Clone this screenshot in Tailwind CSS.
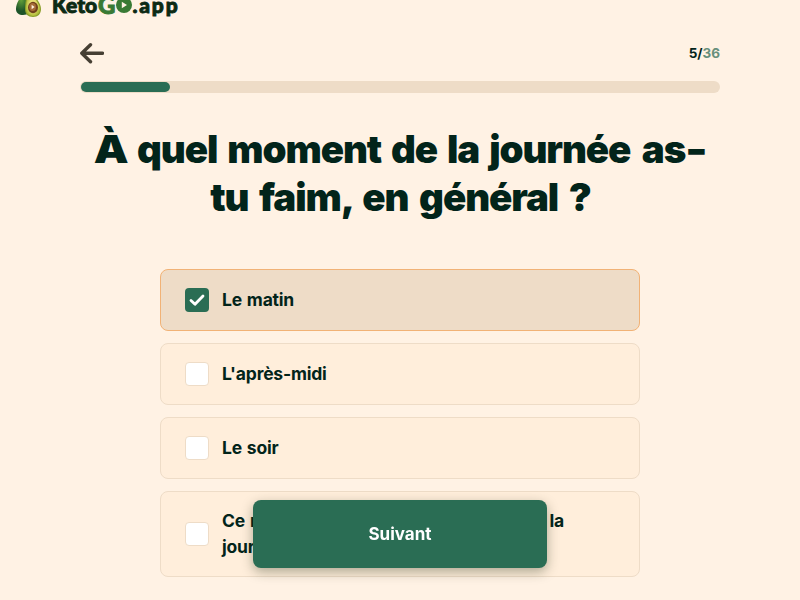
<!DOCTYPE html>
<html lang="fr">
<head>
<meta charset="utf-8">
<title>KetoGO.app</title>
<script src="https://cdn.jsdelivr.net/npm/@tailwindcss/browser@4"></script>
</head>
<body class="h-[600px] overflow-hidden bg-[#fff2e4] font-['Inter',sans-serif] text-[#02241a]">
<header class="flex h-[33px] items-start pl-4">
  <svg class="-mt-[9px] h-[26px] w-[26px] shrink-0" viewBox="0 0 26 26">
    <defs>
      <radialGradient id="skin" cx=".35" cy=".35"><stop offset="0" stop-color="#65a33a"/><stop offset="1" stop-color="#1d5429"/></radialGradient>
      <radialGradient id="flesh"><stop offset=".5" stop-color="#e5dd72"/><stop offset="1" stop-color="#b0bc3a"/></radialGradient>
    </defs>
    <path d="M11 0C5 4 0 12 0 18c0 4 3 6 7 6 5 0 8-3 8-9z" fill="url(#skin)"/>
    <path d="M12 3c3-2 6 0 8 4 3 4 5 7 5 11 0 5-3 8-8 8s-8-3-8-8c0-5 1-13 3-15z" fill="#8c9f2a"/>
    <path d="M13 4c3-1 5 2 7 5 2 3 4 6 4 9 0 4-3 7-7 7s-7-3-7-7c0-5 1-12 3-14z" fill="url(#flesh)"/>
    <ellipse cx="17" cy="16.5" rx="5" ry="5.7" fill="#70401c"/>
    <ellipse cx="16.6" cy="16" rx="3.4" ry="4" fill="#a66b37"/>
    <path d="M15.6 13.8v4.4l3-2.2z" fill="#fff2dd"/>
  </svg>
  <div class="ml-[10px] -mt-[7px] flex h-6 items-center font-['Lato',sans-serif] text-[21px] font-black leading-6 text-[#0c2a14]">
    <span class="w-[46px] tracking-[.1px] [-webkit-text-stroke:.9px_#0c2a14]">Keto</span>
    <span class="w-[17.5px] text-[24px] text-[#397a34] [-webkit-text-stroke:1px_#397a34]">G</span>
    <svg class="h-4 w-4 shrink-0" viewBox="0 0 16 16"><circle cx="8" cy="8" r="8" fill="#397a34"/><path d="M5.8 4.8v6.4l5.2-3.2z" fill="#fff2e4"/></svg>
    <span class="pl-[1px] tracking-[1.8px] [-webkit-text-stroke:.9px_#0c2a14]">.app</span>
  </div>
</header>
<main class="mx-auto w-[640px]">
  <div class="flex h-10 items-center justify-between">
    <svg class="h-6 w-6" viewBox="0 0 24 24" fill="none" stroke="#463f33" stroke-width="3.4" stroke-linecap="round" stroke-linejoin="round"><path d="M10.5 3.7 1.8 12.2l8.7 8.6M2.5 12.2h20"/></svg>
    <div class="text-[13.5px] font-bold leading-5"><span>5/</span><span class="text-[#678f7b]">36</span></div>
  </div>
  <div class="mt-2 flex h-3 items-center rounded-full bg-[#eedcc7] pl-px"><div class="h-[10px] w-[89px] rounded-full bg-[#2a6d54]"></div></div>
  <h1 class="mt-8 text-center text-[38.5px] font-black leading-[48px] tracking-[-1.1px]">
    <span class="-mr-[1px] block whitespace-nowrap [word-spacing:3.4px]"><span class="inline-block origin-right scale-x-[1.14] pl-[2px]">À</span> quel moment de la journée <span class="ml-[1.5px]">as</span><span class="mr-[3px] inline-block origin-left scale-x-[1.25]">-</span></span>
    <span class="-mr-[1px] block whitespace-nowrap [word-spacing:4px]">tu faim, en général ?</span>
  </h1>
  <div class="mx-auto mt-12 flex w-[480px] flex-col gap-3 text-[17.5px] font-bold leading-[26px] tracking-[-.2px] [word-spacing:1px]">
    <label class="flex h-[62px] items-center gap-[13px] rounded-lg border border-[#f1b276] bg-[#eedcc7] pl-6">
      <span class="flex size-6 shrink-0 items-center justify-center rounded bg-[#2a6d54]"><svg class="h-4 w-4" viewBox="0 0 16 16" fill="none" stroke="#fff" stroke-width="2.8" stroke-linecap="round" stroke-linejoin="round"><path d="m2 8.5 4 3.8L14 4"/></svg></span>
      <span>Le matin</span>
    </label>
    <label class="flex h-[62px] items-center gap-[13px] rounded-lg border border-[#eedcc7] bg-[#ffeedb] pl-6">
      <span class="size-6 shrink-0 rounded border border-[#eedcc7] bg-white"></span><span>L'après-midi</span>
    </label>
    <label class="flex h-[62px] items-center gap-[13px] rounded-lg border border-[#eedcc7] bg-[#ffeedb] pl-6">
      <span class="size-6 shrink-0 rounded border border-[#eedcc7] bg-white"></span><span>Le soir</span>
    </label>
    <label class="flex h-[86px] items-center gap-[13px] rounded-lg border border-[#eedcc7] bg-[#ffeedb] pl-6">
      <span class="size-6 shrink-0 rounded border border-[#eedcc7] bg-white"></span>
      <span class="w-[342px]"><span class="flex justify-between"><span>Ce n'est pas</span><span>la</span></span><span class="block">journée</span></span>
    </label>
  </div>
</main>
<button class="fixed left-[253px] top-[500px] h-[68px] w-[294px] rounded-lg bg-[#2a6d54] pt-px text-[17px] font-bold text-white shadow-[0_4px_12px_rgba(42,55,30,.38)]">Suivant</button>
</body>
</html>
